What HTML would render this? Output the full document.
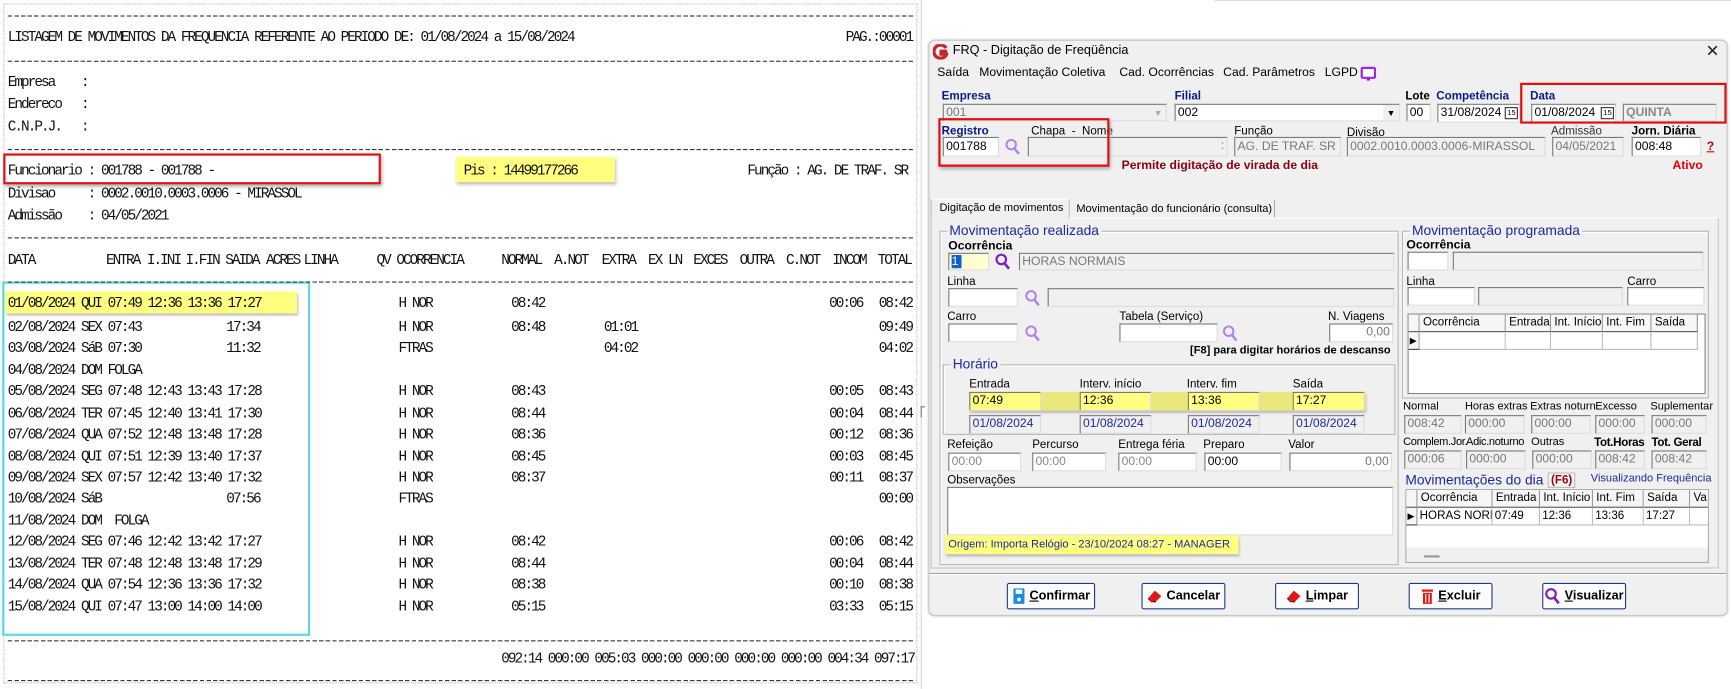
<!DOCTYPE html>
<html><head><meta charset="utf-8">
<style>
*{margin:0;padding:0;box-sizing:border-box}
html,body{width:1731px;height:689px;overflow:hidden;background:#fff}
#s{position:absolute;left:0;top:0;width:1568px;height:624px;transform:scale(1.10395);transform-origin:0 0}
.a{position:absolute;white-space:pre}
.rp{font-family:"Liberation Mono",monospace;font-size:13px;letter-spacing:-1.77px;color:#111;line-height:14px}
.dash{position:absolute;left:7px;width:820px;height:1px;background:repeating-linear-gradient(90deg,#333 0 4px,transparent 4px 6px)}
.r{position:absolute;left:0;width:840px;height:14px}
.r span{position:absolute;top:0;white-space:pre}
.c0{left:7px}.c1{left:73px}.c2{left:97px}.c3{left:133px}.c4{left:169px}.c5{left:205px}.c6{left:361px}.c7{left:463px}.c8{left:547px}.c9{left:751px}.c10{left:796px}
.w{font-family:"Liberation Sans",sans-serif;font-size:11px;color:#000}
.lb{position:absolute;font-family:"Liberation Sans",sans-serif;font-size:10.5px;color:#000;white-space:pre;line-height:12px}
.bl{color:#0a1a8a;font-weight:bold}
.in{position:absolute;background:#fff;border:1px solid;border-color:#7a7a7a #dcdcdc #dcdcdc #7a7a7a;font-family:"Liberation Sans",sans-serif;font-size:11px;line-height:15px;padding-left:2px;white-space:pre;overflow:hidden}
.dis{background:#f0f0f0;color:#777}
.grp{position:absolute;border:1px solid #b8b8b8;box-shadow:inset 1px 1px 0 #fff}
.gt{position:absolute;top:-8px;left:6px;background:#f0f0f0;padding:0 2px;font-family:"Liberation Sans",sans-serif;font-size:12.5px;color:#1a2aa0;white-space:pre}
.btn{position:absolute;top:528px;height:24px;background:#fcfcfc;border:1px solid #1c3c8c;border-radius:2px;font-family:"Liberation Sans",sans-serif;font-size:11.5px;font-weight:bold;display:flex;align-items:center;justify-content:center;gap:4px;white-space:pre}
.gh{position:absolute;background:#f6f6f6;border-right:1px solid #999;border-bottom:1px solid #444;font-family:"Liberation Sans",sans-serif;font-size:10.5px;line-height:15px;padding-left:3px;white-space:pre;overflow:hidden}
.gd{position:absolute;background:#fff;border-right:1px solid #bbb;border-bottom:1px solid #bbb;font-family:"Liberation Sans",sans-serif;font-size:10.5px;line-height:15px;padding-left:2px;white-space:pre;overflow:hidden}
</style></head><body><div id="s">

<!-- REPORT -->
<div class="a" style="left:3px;top:3px;width:828px;height:616px;border:1px dotted #bbb"></div>
<div class="a" style="left:834px;top:0;width:1px;height:624px;background:#d8d8d8"></div>
<div class="a" style="left:834px;top:368px;width:4px;height:10px;border-left:1px solid #777;border-top:1px solid #777"></div>
<div class="a" style="left:1100px;top:0;width:468px;height:1px;background:#ddd"></div>
<div class="a" style="left:3px;top:139px;width:342px;height:28px;border:2px solid #e01010;box-shadow:1px 2px 3px #aaa"></div>
<div class="a" style="left:413px;top:142px;width:144px;height:23px;background:#ffff80;box-shadow:1px 2px 3px #bbb"></div>
<div class="a" style="left:5px;top:264px;width:264px;height:20px;background:#ffff80;box-shadow:1px 2px 2px #bbb"></div>
<div class="a" style="left:2px;top:255px;width:279px;height:321px;border:2px solid #60d8e0"></div>

<div class="dash" style="top:14px"></div>
<div class="dash" style="top:55px"></div>
<div class="dash" style="top:135px"></div>
<div class="dash" style="top:215px"></div>
<div class="dash" style="top:255px"></div>
<div class="dash" style="top:580px"></div>
<div class="dash" style="top:616px"></div>

<div class="rp">
<div class="r" style="top:27px"><span class="c0">LISTAGEM DE MOVIMENTOS DA FREQUENCIA REFERENTE AO PERIODO DE: 01/08/2024 a 15/08/2024</span><span style="left:766px">PAG.:00001</span></div>
<div class="r" style="top:68px"><span class="c0">Empresa    :</span></div>
<div class="r" style="top:88px"><span class="c0">Endereco   :</span></div>
<div class="r" style="top:108px"><span class="c0">C.N.P.J.   :</span></div>
<div class="r" style="top:148px"><span class="c0">Funcionario : 001788 - 001788 -</span><span style="left:420px">Pis : 14499177266</span><span style="left:677px">Função : AG. DE TRAF. SR</span></div>
<div class="r" style="top:169px"><span class="c0">Divisao     : 0002.0010.0003.0006 - MIRASSOL</span></div>
<div class="r" style="top:189px"><span class="c0">Admissão    : 04/05/2021</span></div>
<div class="r" style="top:229px"><span class="c0">DATA</span><span style="left:96px">ENTRA</span><span style="left:133px">I.INI</span><span style="left:168px">I.FIN</span><span style="left:204px">SAIDA</span><span style="left:241px">ACRES</span><span style="left:275px">LINHA</span><span style="left:341px">QV</span><span style="left:359px">OCORRENCIA</span><span style="left:454px">NORMAL</span><span style="left:502px">A.NOT</span><span style="left:545px">EXTRA</span><span style="left:587px">EX LN</span><span style="left:628px">EXCES</span><span style="left:670px">OUTRA</span><span style="left:712px">C.NOT</span><span style="left:754px">INCOM</span><span style="left:795px">TOTAL</span></div>

<div class="r" style="top:268px"><span class="c0">01/08/2024 QUI 07:49 12:36 13:36 17:27</span><span class="c6">H NOR</span><span class="c7">08:42</span><span class="c9">00:06</span><span class="c10">08:42</span></div>
<div class="r" style="top:290px"><span class="c0">02/08/2024 SEX 07:43</span><span class="c5">17:34</span><span class="c6">H NOR</span><span class="c7">08:48</span><span class="c8">01:01</span><span class="c10">09:49</span></div>
<div class="r" style="top:309px"><span class="c0">03/08/2024 SáB 07:30</span><span class="c5">11:32</span><span class="c6">FTRAS</span><span class="c8">04:02</span><span class="c10">04:02</span></div>
<div class="r" style="top:329px"><span class="c0">04/08/2024 DOM FOLGA</span></div>
<div class="r" style="top:348px"><span class="c0">05/08/2024 SEG 07:48 12:43 13:43 17:28</span><span class="c6">H NOR</span><span class="c7">08:43</span><span class="c9">00:05</span><span class="c10">08:43</span></div>
<div class="r" style="top:368px"><span class="c0">06/08/2024 TER 07:45 12:40 13:41 17:30</span><span class="c6">H NOR</span><span class="c7">08:44</span><span class="c9">00:04</span><span class="c10">08:44</span></div>
<div class="r" style="top:387px"><span class="c0">07/08/2024 QUA 07:52 12:48 13:48 17:28</span><span class="c6">H NOR</span><span class="c7">08:36</span><span class="c9">00:12</span><span class="c10">08:36</span></div>
<div class="r" style="top:407px"><span class="c0">08/08/2024 QUI 07:51 12:39 13:40 17:37</span><span class="c6">H NOR</span><span class="c7">08:45</span><span class="c9">00:03</span><span class="c10">08:45</span></div>
<div class="r" style="top:426px"><span class="c0">09/08/2024 SEX 07:57 12:42 13:40 17:32</span><span class="c6">H NOR</span><span class="c7">08:37</span><span class="c9">00:11</span><span class="c10">08:37</span></div>
<div class="r" style="top:445px"><span class="c0">10/08/2024 SáB</span><span class="c5">07:56</span><span class="c6">FTRAS</span><span class="c10">00:00</span></div>
<div class="r" style="top:465px"><span class="c0">11/08/2024 DOM  FOLGA</span></div>
<div class="r" style="top:484px"><span class="c0">12/08/2024 SEG 07:46 12:42 13:42 17:27</span><span class="c6">H NOR</span><span class="c7">08:42</span><span class="c9">00:06</span><span class="c10">08:42</span></div>
<div class="r" style="top:504px"><span class="c0">13/08/2024 TER 07:48 12:48 13:48 17:29</span><span class="c6">H NOR</span><span class="c7">08:44</span><span class="c9">00:04</span><span class="c10">08:44</span></div>
<div class="r" style="top:523px"><span class="c0">14/08/2024 QUA 07:54 12:36 13:36 17:32</span><span class="c6">H NOR</span><span class="c7">08:38</span><span class="c9">00:10</span><span class="c10">08:38</span></div>
<div class="r" style="top:543px"><span class="c0">15/08/2024 QUI 07:47 13:00 14:00 14:00</span><span class="c6">H NOR</span><span class="c7">05:15</span><span class="c9">03:33</span><span class="c10">05:15</span></div>
<div class="r" style="top:590px"><span style="left:454px">092:14 000:00 005:03 000:00 000:00 000:00 000:00 004:34 097:17</span></div>
</div>

<!-- WINDOW -->
<div class="a" style="left:841px;top:36px;width:724px;height:522px;background:#f0f0f0;border:1px solid #c8c8c8;border-radius:6px;box-shadow:0 0 2px #ccc"></div>
<svg class="a" style="left:845px;top:40px" width="14" height="14" viewBox="0 0 14 14"><path d="M12 3.5A6 6 0 1 0 12.5 9H7.5V6.5H13" fill="none" stroke="#c0282e" stroke-width="3"/></svg>
<div class="a w" style="left:863px;top:40px;font-size:11.5px">FRQ - Digitação de Freqüência</div>
<div class="a w" style="left:1545px;top:37px;font-size:15px;color:#222">✕</div>
<div class="a w" style="left:849px;top:60px">Saída</div>
<div class="a w" style="left:887px;top:60px">Movimentação Coletiva</div>
<div class="a w" style="left:1014px;top:60px">Cad. Ocorrências</div>
<div class="a w" style="left:1108px;top:60px">Cad. Parâmetros</div>
<div class="a w" style="left:1200px;top:60px">LGPD</div>
<svg class="a" style="left:1232px;top:60px" width="15" height="14"><rect x="1.5" y="1.5" width="12" height="9" rx="1" fill="#fff" stroke="#9a28e0" stroke-width="2"/><rect x="6" y="11" width="3" height="2" fill="#9a28e0"/></svg>

<div class="lb bl" style="left:853px;top:81px">Empresa</div>
<div class="lb bl" style="left:1064px;top:81px">Filial</div>
<div class="lb" style="left:1273px;top:81px;font-weight:bold">Lote</div>
<div class="lb bl" style="left:1301px;top:81px">Competência</div>
<div class="lb bl" style="left:1386px;top:81px">Data</div>
<div class="in dis" style="left:854px;top:94px;width:203px;height:16px">001<span style="position:absolute;right:0;top:0;width:14px;height:14px;font-size:8px;color:#aaa;text-align:center">▼</span></div>
<div class="in" style="left:1064px;top:94px;width:204px;height:16px">002<span style="position:absolute;right:0;top:0;width:14px;height:14px;font-size:8px;color:#000;text-align:center;background:#f0f0f0">▼</span></div>
<div class="in" style="left:1274px;top:94px;width:22px;height:16px">00</div>
<div class="in" style="left:1302px;top:94px;width:75px;height:17px">31/08/2024<span style="position:absolute;right:1px;top:2px;font-size:7px;border:1px solid #333;line-height:9px;padding:0 1px">15</span></div>
<div class="in" style="left:1387px;top:94px;width:77px;height:17px">01/08/2024<span style="position:absolute;right:1px;top:2px;font-size:7px;border:1px solid #333;line-height:9px;padding:0 1px">15</span></div>
<div class="in dis" style="left:1470px;top:94px;width:85px;height:16px;font-weight:bold;color:#888">QUINTA</div>
<div class="a" style="left:1377px;top:75px;width:187px;height:37px;border:2px solid #e01010"></div>

<div class="lb bl" style="left:853px;top:113px">Registro</div>
<div class="lb" style="left:934px;top:113px">Chapa  -  Nome</div>
<div class="lb" style="left:1118px;top:113px">Função</div>
<div class="lb" style="left:1220px;top:114px">Divisão</div>
<div class="lb" style="left:1405px;top:113px;color:#333">Admissão</div>
<div class="lb" style="left:1478px;top:113px;font-weight:bold">Jorn. Diária</div>
<div class="in" style="left:854px;top:124px;width:51px;height:18px;line-height:16px">001788</div>
<svg class="a" style="left:910px;top:125px" width="14" height="16"><circle cx="6" cy="6" r="4.3" fill="none" stroke="#b080e8" stroke-width="1.8"/><path d="M9 9.5 13 14.5" stroke="#b080e8" stroke-width="2.2"/></svg>
<div class="in dis" style="left:931px;top:124px;width:181px;height:18px;text-align:right;padding-right:2px">:</div>
<div class="in dis" style="left:1118px;top:124px;width:97px;height:18px;line-height:16px">AG. DE TRAF. SR</div>
<div class="in dis" style="left:1220px;top:124px;width:180px;height:18px;line-height:16px">0002.0010.0003.0006-MIRASSOL</div>
<div class="in dis" style="left:1406px;top:124px;width:65px;height:18px;line-height:16px">04/05/2021</div>
<div class="in" style="left:1478px;top:124px;width:63px;height:18px;line-height:16px">008:48</div>
<div class="lb" style="left:1546px;top:127px;color:#c00;font-weight:bold;font-size:11px;text-decoration:underline">?</div>
<div class="a" style="left:850px;top:107px;width:155px;height:44px;border:2px solid #e01010;box-shadow:1px 2px 3px #aaa"></div>
<div class="lb" style="left:1016px;top:144px;color:#8a0010;font-weight:bold;font-size:11px">Permite digitação de virada de dia</div>
<div class="lb" style="left:1515px;top:144px;color:#e00000;font-weight:bold;font-size:11px">Ativo</div>

<!-- tabs -->
<div class="a" style="left:843px;top:197px;width:714px;height:318px;border:1px solid #c8c8c8;border-top-color:#fff;background:#f0f0f0"></div>
<div class="a" style="left:843px;top:180px;width:126px;height:18px;background:#f0f0f0;border:1px solid #c0c0c0;border-bottom:none;border-top-color:#fff"></div>
<div class="lb" style="left:851px;top:183px;font-size:10px">Digitação de movimentos</div>
<div class="a" style="left:969px;top:181px;width:186px;height:16px;border-right:1px solid #aaa"></div>
<div class="lb" style="left:975px;top:184px;font-size:10px">Movimentação do funcionário (consulta)</div>

<div class="grp" style="left:851px;top:209px;width:416px;height:303px"><div class="gt">Movimentação realizada</div></div>
<div class="lb" style="left:859px;top:217px;font-weight:bold;font-size:11px">Ocorrência</div>
<div class="in" style="left:859px;top:229px;width:37px;height:16px;background:#ffffd0"><span style="background:#1060d0;color:#fff">1 </span></div>
<svg class="a" style="left:901px;top:229px" width="14" height="16"><circle cx="6" cy="6" r="4.3" fill="none" stroke="#7a20c8" stroke-width="2"/><path d="M9 9.5 13 14.5" stroke="#7a20c8" stroke-width="2.4"/></svg>
<div class="in dis" style="left:923px;top:229px;width:340px;height:16px">HORAS NORMAIS</div>
<div class="lb" style="left:858px;top:249px">Linha</div>
<div class="in" style="left:859px;top:261px;width:63px;height:17px"></div>
<svg class="a" style="left:928px;top:262px" width="14" height="16"><circle cx="6" cy="6" r="4.3" fill="none" stroke="#b080e8" stroke-width="1.8"/><path d="M9 9.5 13 14.5" stroke="#b080e8" stroke-width="2.2"/></svg>
<div class="in dis" style="left:949px;top:261px;width:314px;height:17px"></div>
<div class="lb" style="left:858px;top:281px">Carro</div>
<div class="lb" style="left:1014px;top:281px">Tabela (Serviço)</div>
<div class="lb" style="left:1203px;top:281px">N. Viagens</div>
<div class="in" style="left:859px;top:293px;width:63px;height:17px"></div>
<svg class="a" style="left:928px;top:294px" width="14" height="16"><circle cx="6" cy="6" r="4.3" fill="none" stroke="#b080e8" stroke-width="1.8"/><path d="M9 9.5 13 14.5" stroke="#b080e8" stroke-width="2.2"/></svg>
<div class="in" style="left:1014px;top:293px;width:89px;height:17px"></div>
<svg class="a" style="left:1107px;top:294px" width="14" height="16"><circle cx="6" cy="6" r="4.3" fill="none" stroke="#b080e8" stroke-width="1.8"/><path d="M9 9.5 13 14.5" stroke="#b080e8" stroke-width="2.2"/></svg>
<div class="in" style="left:1204px;top:293px;width:58px;height:17px;text-align:right;padding-right:2px;color:#777">0,00</div>
<div class="lb" style="left:1078px;top:312px;font-weight:bold;font-size:10px">[F8] para digitar horários de descanso</div>

<div class="grp" style="left:854px;top:330px;width:410px;height:64px"><div class="gt">Horário</div></div>
<div class="lb" style="left:878px;top:342px">Entrada</div>
<div class="lb" style="left:978px;top:342px">Interv. início</div>
<div class="lb" style="left:1075px;top:342px">Interv. fim</div>
<div class="lb" style="left:1171px;top:342px">Saída</div>
<div class="a" style="left:878px;top:355px;width:359px;height:17px;background:#e8e87c;box-shadow:1px 2px 2px #bbb"></div>
<div class="in" style="left:878px;top:355px;width:65px;height:17px;background:#ffff80">07:49</div>
<div class="in" style="left:978px;top:355px;width:65px;height:17px;background:#ffff80">12:36</div>
<div class="in" style="left:1076px;top:355px;width:65px;height:17px;background:#ffff80">13:36</div>
<div class="in" style="left:1171px;top:355px;width:65px;height:17px;background:#ffff80">17:27</div>
<div class="in dis" style="left:878px;top:376px;width:65px;height:17px;color:#1a2aa0">01/08/2024</div>
<div class="in dis" style="left:978px;top:376px;width:65px;height:17px;color:#1a2aa0">01/08/2024</div>
<div class="in dis" style="left:1076px;top:376px;width:65px;height:17px;color:#1a2aa0">01/08/2024</div>
<div class="in dis" style="left:1171px;top:376px;width:65px;height:17px;color:#1a2aa0">01/08/2024</div>

<div class="lb" style="left:858px;top:397px">Refeição</div>
<div class="lb" style="left:935px;top:397px">Percurso</div>
<div class="lb" style="left:1013px;top:397px">Entrega féria</div>
<div class="lb" style="left:1090px;top:397px">Preparo</div>
<div class="lb" style="left:1167px;top:397px">Valor</div>
<div class="in" style="left:859px;top:410px;width:66px;height:17px;color:#888">00:00</div>
<div class="in" style="left:935px;top:410px;width:67px;height:17px;color:#888">00:00</div>
<div class="in" style="left:1013px;top:410px;width:71px;height:17px;color:#888">00:00</div>
<div class="in" style="left:1091px;top:410px;width:70px;height:17px">00:00</div>
<div class="in" style="left:1168px;top:410px;width:93px;height:17px;text-align:right;padding-right:2px;color:#777">0,00</div>
<div class="lb" style="left:858px;top:429px">Observações</div>
<div class="in" style="left:858px;top:441px;width:404px;height:44px"></div>
<div class="a" style="left:856px;top:485px;width:266px;height:17px;background:#ffff80;box-shadow:1px 2px 2px #bbb"></div>
<div class="lb" style="left:859px;top:488px;color:#1a2aa0;font-size:10px">Origem: Importa Relógio - 23/10/2024 08:27 - MANAGER</div>

<!-- right group -->
<div class="grp" style="left:1270px;top:209px;width:278px;height:152px"><div class="gt">Movimentação programada</div></div>
<div class="lb" style="left:1274px;top:216px;font-weight:bold;font-size:11px">Ocorrência</div>
<div class="in" style="left:1275px;top:228px;width:37px;height:17px"></div>
<div class="in dis" style="left:1316px;top:228px;width:227px;height:17px"></div>
<div class="lb" style="left:1274px;top:249px">Linha</div>
<div class="lb" style="left:1474px;top:249px">Carro</div>
<div class="in" style="left:1275px;top:260px;width:61px;height:17px"></div>
<div class="in dis" style="left:1339px;top:260px;width:131px;height:17px"></div>
<div class="in" style="left:1474px;top:260px;width:70px;height:17px"></div>
<div class="a" style="left:1275px;top:284px;width:270px;height:73px;background:#fff;border:1px solid #888"></div>
<div class="gh" style="left:1276px;top:285px;width:10px;height:16px"></div>
<div class="gh" style="left:1286px;top:285px;width:78px;height:16px">Ocorrência</div>
<div class="gh" style="left:1364px;top:285px;width:41px;height:16px">Entrada</div>
<div class="gh" style="left:1405px;top:285px;width:47px;height:16px">Int. Início</div>
<div class="gh" style="left:1452px;top:285px;width:44px;height:16px">Int. Fim</div>
<div class="gh" style="left:1496px;top:285px;width:42px;height:16px">Saída</div>
<div class="gh" style="left:1276px;top:301px;width:10px;height:16px;font-size:8px;padding-left:1px">▶</div>
<div class="gd" style="left:1286px;top:301px;width:78px;height:16px"></div>
<div class="gd" style="left:1364px;top:301px;width:41px;height:16px"></div>
<div class="gd" style="left:1405px;top:301px;width:47px;height:16px"></div>
<div class="gd" style="left:1452px;top:301px;width:44px;height:16px"></div>
<div class="gd" style="left:1496px;top:301px;width:42px;height:16px"></div>

<div class="lb" style="left:1271px;top:363px;font-size:10px">Normal</div>
<div class="lb" style="left:1327px;top:363px;font-size:10px">Horas extras</div>
<div class="lb" style="left:1386px;top:363px;font-size:10px">Extras noturn.</div>
<div class="lb" style="left:1445px;top:363px;font-size:10px">Excesso</div>
<div class="lb" style="left:1495px;top:363px;font-size:10px">Suplementar</div>
<div class="in dis" style="left:1272px;top:376px;width:52px;height:17px">008:42</div>
<div class="in dis" style="left:1327px;top:376px;width:54px;height:17px">000:00</div>
<div class="in dis" style="left:1387px;top:376px;width:54px;height:17px">000:00</div>
<div class="in dis" style="left:1445px;top:376px;width:45px;height:17px">000:00</div>
<div class="in dis" style="left:1496px;top:376px;width:50px;height:17px">000:00</div>
<div class="lb" style="left:1271px;top:395px;font-size:10px;letter-spacing:-0.3px">Complem.Jor.</div>
<div class="lb" style="left:1328px;top:395px;font-size:10px;letter-spacing:-0.3px">Adic.noturno</div>
<div class="lb" style="left:1387px;top:395px;font-size:10px">Outras</div>
<div class="lb" style="left:1444px;top:395px;font-weight:bold;font-size:10.5px;letter-spacing:-0.3px">Tot.Horas</div>
<div class="lb" style="left:1496px;top:395px;font-weight:bold;font-size:10.5px;letter-spacing:-0.3px">Tot. Geral</div>
<div class="in dis" style="left:1272px;top:408px;width:52px;height:17px">000:06</div>
<div class="in dis" style="left:1328px;top:408px;width:54px;height:17px">000:00</div>
<div class="in dis" style="left:1388px;top:408px;width:54px;height:17px">000:00</div>
<div class="in dis" style="left:1445px;top:408px;width:45px;height:17px">008:42</div>
<div class="in dis" style="left:1496px;top:408px;width:50px;height:17px">008:42</div>
<div class="lb" style="left:1273px;top:428px;color:#1a2aa0;font-size:12.5px;line-height:14px">Movimentações do dia</div>
<div class="lb" style="left:1402px;top:428px;color:#9a0010;font-weight:bold;font-size:10.5px;border:1px solid #bbb;padding:0 2px;background:#f4f4f4">(F6)</div>
<div class="lb" style="left:1441px;top:428px;color:#1a2aa0;font-size:10px">Visualizando Frequência</div>
<div class="a" style="left:1273px;top:443px;width:275px;height:67px;background:#f0f0f0;border:1px solid #aaa"></div>
<div class="a" style="left:1274px;top:444px;width:273px;height:52px;background:#fff"></div>
<div class="gh" style="left:1274px;top:444px;width:10px;height:16px"></div>
<div class="gh" style="left:1284px;top:444px;width:68px;height:16px">Ocorrência</div>
<div class="gh" style="left:1352px;top:444px;width:43px;height:16px">Entrada</div>
<div class="gh" style="left:1395px;top:444px;width:48px;height:16px">Int. Início</div>
<div class="gh" style="left:1443px;top:444px;width:46px;height:16px">Int. Fim</div>
<div class="gh" style="left:1489px;top:444px;width:42px;height:16px">Saída</div>
<div class="gh" style="left:1531px;top:444px;width:16px;height:16px;border-right:none">Va</div>
<div class="gh" style="left:1274px;top:460px;width:10px;height:16px;font-size:8px;padding-left:1px">▶</div>
<div class="gd" style="left:1284px;top:460px;width:68px;height:16px">HORAS NORM</div>
<div class="gd" style="left:1352px;top:460px;width:43px;height:16px">07:49</div>
<div class="gd" style="left:1395px;top:460px;width:48px;height:16px">12:36</div>
<div class="gd" style="left:1443px;top:460px;width:46px;height:16px">13:36</div>
<div class="gd" style="left:1489px;top:460px;width:42px;height:16px">17:27</div>
<div class="gd" style="left:1531px;top:460px;width:16px;height:16px;border-right:none"></div>
<div class="a" style="left:1290px;top:503px;width:14px;height:2px;background:#999"></div>

<!-- buttons -->
<div class="a" style="left:842px;top:519px;width:722px;height:2px;border-top:1px solid #a0a0a0;border-bottom:1px solid #fff"></div>
<div class="btn" style="left:912px;width:80px"><svg width="12" height="16"><rect x="1" y="1" width="10" height="14" rx="1" fill="#1a8ae8"/><rect x="3" y="2" width="6" height="4" fill="#fff"/><circle cx="6" cy="11" r="1.8" fill="#fff"/></svg><span><u>C</u>onfirmar</span></div>
<div class="btn" style="left:1034px;width:76px"><svg width="14" height="14"><path d="M1 9 7 2 13 7 7 13Z" fill="#e01818"/><path d="M1 9 4 12H8" fill="none" stroke="#800" stroke-width="1"/></svg><span>Cancelar</span></div>
<div class="btn" style="left:1155px;width:76px"><svg width="14" height="14"><path d="M1 9 7 2 13 7 7 13Z" fill="#e01818"/><path d="M1 9 4 12H8" fill="none" stroke="#800" stroke-width="1"/></svg><span><u>L</u>impar</span></div>
<div class="btn" style="left:1276px;width:76px"><svg width="12" height="15"><rect x="1" y="1" width="10" height="2" fill="#e01818"/><rect x="2" y="4" width="8" height="10" fill="#e01818"/><path d="M4.5 5V13M7.5 5V13" stroke="#fff" stroke-width="1"/></svg><span><u>E</u>xcluir</span></div>
<div class="btn" style="left:1397px;width:76px"><svg width="14" height="16"><circle cx="6" cy="6" r="4.3" fill="none" stroke="#7a20c8" stroke-width="2"/><path d="M9 9.5 13 14.5" stroke="#7a20c8" stroke-width="2.4"/></svg><span><u>V</u>isualizar</span></div>

</div></body></html>
